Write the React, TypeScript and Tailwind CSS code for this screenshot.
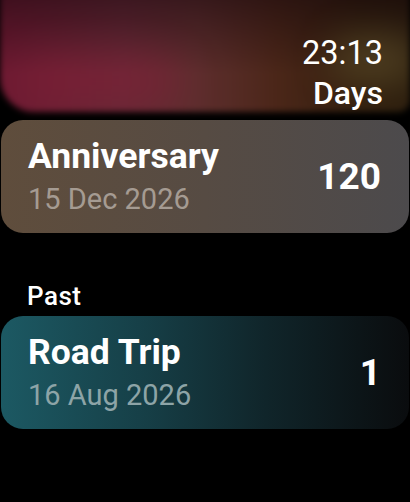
import React from 'react'

type Countdown = { title: string; date: string; days: number; tone: 'upcoming' | 'past' }

const upcoming: Countdown = { title: 'Anniversary', date: '15 Dec 2026', days: 120, tone: 'upcoming' }
const past: Countdown = { title: 'Road Trip', date: '16 Aug 2026', days: 1, tone: 'past' }

function CountdownCard({ item }: { item: Countdown }) {
  const bg =
    item.tone === 'upcoming'
      ? 'bg-[linear-gradient(90deg,#5f4d3c_0%,#564b43_50%,#4c4a4c_100%)]'
      : 'bg-[linear-gradient(90deg,#1c5963_0%,#163f47_35%,#10252a_65%,#0a0c0e_100%)]'
  const dateColor = item.tone === 'upcoming' ? 'text-[#a59b92]' : 'text-[#8da4a7]'

  return (
    <div className={`mx-[1px] flex h-[113px] items-center justify-between rounded-[22px] pl-[27px] pr-[28px] ${bg}`}>
      <div className="flex flex-col">
        <span className="text-[35.5px] leading-[40px] font-bold text-white">{item.title}</span>
        <span className={`mt-[5px] text-[29px] leading-[36px] ${dateColor}`}>{item.date}</span>
      </div>
      <span className="text-[37px] leading-[40px] font-bold text-white">{item.days}</span>
    </div>
  )
}

export default function App() {
  return (
    <div className="h-[502px] w-full overflow-hidden bg-black font-['Roboto','Noto_Sans',sans-serif] antialiased select-none">
      {/* Blurred ambient header */}
      <div className="relative h-[120px]">
        <div className="absolute inset-x-0 -top-4 bottom-[8px] overflow-hidden rounded-bl-[34px] rounded-br-[12px] bg-[linear-gradient(90deg,#6e1a32_0%,#682a37_30%,#5e2e2e_48%,#4a2618_68%,#33200f_88%,#2c1e0e_100%)] blur-[3px]">
          <div className="absolute inset-0 bg-[linear-gradient(180deg,rgba(18,4,10,0.6)_0%,rgba(18,4,10,0.25)_40%,rgba(0,0,0,0)_70%)]" />
          <div className="absolute left-[20px] top-[75px] h-[45px] w-[160px] rounded-full bg-[#861c36] opacity-50 blur-[20px]" />
          <div className="absolute left-[330px] top-[50px] h-[50px] w-[90px] rounded-full bg-[#5a4a28] opacity-70 blur-[18px]" />
        </div>
        <div className="relative flex flex-col items-end pt-[33px] pr-[27px] text-white">
          <span className="text-[32.5px] leading-[40px] font-normal tabular-nums">23:13</span>
          <span className="text-[32px] leading-[40px] font-medium">Days</span>
        </div>
      </div>

      <CountdownCard item={upcoming} />

      <div className="mt-[47px] pl-[27px] text-[26px] leading-[32px] font-medium tracking-[0.5px] text-white">Past</div>

      <div className="mt-[4px]">
        <CountdownCard item={past} />
      </div>
    </div>
  )
}
